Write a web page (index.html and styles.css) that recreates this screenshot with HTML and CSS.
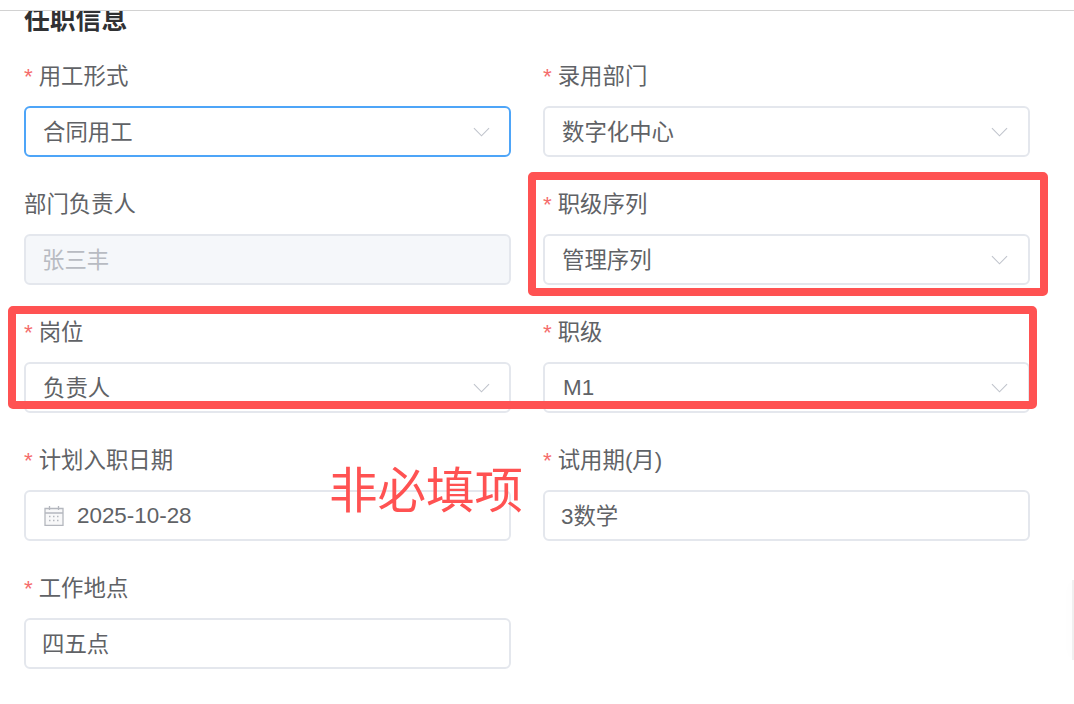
FILE: index.html
```html
<!DOCTYPE html>
<html lang="zh-CN">
<head>
<meta charset="utf-8">
<title>任职信息</title>
<link rel="stylesheet" href="styles.css">
</head>
<body>
<div class="topbar"></div>
<main class="content">
  <h2 class="title">任职信息</h2>
  <form class="form">
    <div class="item">
      <label class="label req">用工形式</label>
      <div class="control focus"><span class="value cjk">合同用工</span>
        <svg class="chev" viewBox="0 0 18 10"><path d="M1 1l8 8 8-8"/></svg></div>
    </div>
    <div class="item">
      <label class="label req">录用部门</label>
      <div class="control"><span class="value cjk">数字化中心</span>
        <svg class="chev" viewBox="0 0 18 10"><path d="M1 1l8 8 8-8"/></svg></div>
    </div>
    <div class="item">
      <label class="label">部门负责人</label>
      <div class="control plain disabled"><span class="value cjk">张三丰</span></div>
    </div>
    <div class="item">
      <label class="label req">职级序列</label>
      <div class="control"><span class="value cjk">管理序列</span>
        <svg class="chev" viewBox="0 0 18 10"><path d="M1 1l8 8 8-8"/></svg></div>
    </div>
    <div class="item">
      <label class="label req">岗位</label>
      <div class="control"><span class="value cjk">负责人</span>
        <svg class="chev" viewBox="0 0 18 10"><path d="M1 1l8 8 8-8"/></svg></div>
    </div>
    <div class="item">
      <label class="label req">职级</label>
      <div class="control"><span class="value latin">M1</span>
        <svg class="chev" viewBox="0 0 18 10"><path d="M1 1l8 8 8-8"/></svg></div>
    </div>
    <div class="item">
      <label class="label req">计划入职日期</label>
      <div class="control date">
        <svg class="cal" viewBox="0 0 20 21">
          <path class="cal-fill" d="M1 3.5h18v17h-18z"/>
          <path class="cal-line" d="M1 3.5h18v17h-18zM1 8h18M5.5 1v4M14.5 1v4"/>
          <path class="cal-dots" d="M5 11.5h2M9 11.5h2M13 11.5h2M5 15.5h2M9 15.5h2M13 15.5h2"/>
        </svg>
        <span class="value">2025-10-28</span>
      </div>
    </div>
    <div class="item">
      <label class="label req">试用期(月)</label>
      <div class="control plain"><span class="value cjk">3数学</span></div>
    </div>
    <div class="item">
      <label class="label req">工作地点</label>
      <div class="control plain"><span class="value cjk">四五点</span></div>
    </div>
  </form>
</main>
<div class="mark mark-a"></div>
<div class="mark mark-b"></div>
<div class="note">非必填项</div>
<div class="edge"></div>
</body>
</html>
```
FILE: styles.css
```css
* { box-sizing: border-box; }
html, body { height: 100%; }
body {
  margin: 0;
  position: relative;
  overflow: hidden;
  background: #fff;
  font-family: "Liberation Sans", "Noto Sans CJK SC", sans-serif;
  font-size: 22.4px;
  color: #606266;
}
.topbar {
  height: 11px;
  border-bottom: 1px solid #d2d2d2;
}
.content {
  height: 693px;
  overflow: hidden;
  padding: 0 44px 0 24px;
}
.title {
  margin: 0 0 27px;
  height: 18px;
  line-height: 18px;
  font-size: 25.8px;
  font-weight: 700;
  color: #303133;
}
.form {
  display: grid;
  grid-template-columns: 487px 487px;
  column-gap: 32px;
  row-gap: 27px;
}
.label {
  display: block;
  height: 42px;
  line-height: 42px;
  margin-bottom: 8px;
}
.req::before {
  content: "*";
  color: #f56c6c;
  margin-right: 6px;
}
.control {
  display: flex;
  align-items: center;
  height: 51px;
  padding: 0 19px 0 17px;
  border: 2px solid #e4e7ed;
  border-radius: 6px;
  background: #fff;
}
.item:nth-child(even) .control { padding-right: 20px; }
.plain { padding-left: 16px; }
.value { flex: 1; }
.cjk { padding-bottom: 4px; }
.latin { padding-left: 1px; }
.focus { border-color: #4ea5f8; }
.disabled {
  background: #f5f7fa;
  color: #b8bbc2;
}
.chev {
  width: 17px;
  height: 10px;
  fill: none;
  stroke: #c0c4cc;
  stroke-width: 1.2;
}
.date { gap: 13px; }
.cal {
  width: 20px;
  height: 21px;
  margin-left: 1px;
  fill: none;
  stroke: #b4b7be;
}
.cal-fill { fill: #f8f8f9; stroke: none; }
.cal-line { stroke-width: 1.3; }
.cal-dots { stroke-width: 1.4; stroke-dasharray: 1.5 .5; }
.mark {
  position: absolute;
  border: 8px solid #ff5252;
  border-radius: 5px;
}
.mark-a { left: 528px; top: 172px; width: 520px; height: 124px; }
.mark-b { left: 8px; top: 306px; width: 1029px; height: 103px; }
.note {
  position: absolute;
  left: 329px;
  top: 455px;
  font-family: "Noto Sans CJK SC", sans-serif;
  font-size: 48.5px;
  font-weight: 400;
  line-height: 64px;
  color: #ff5252;
}
.edge {
  position: absolute;
  right: 0;
  top: 580px;
  width: 2px;
  height: 80px;
  background: #f0f0f0;
  box-shadow: 0 0 14px rgba(0,0,0,.05);
}
```
